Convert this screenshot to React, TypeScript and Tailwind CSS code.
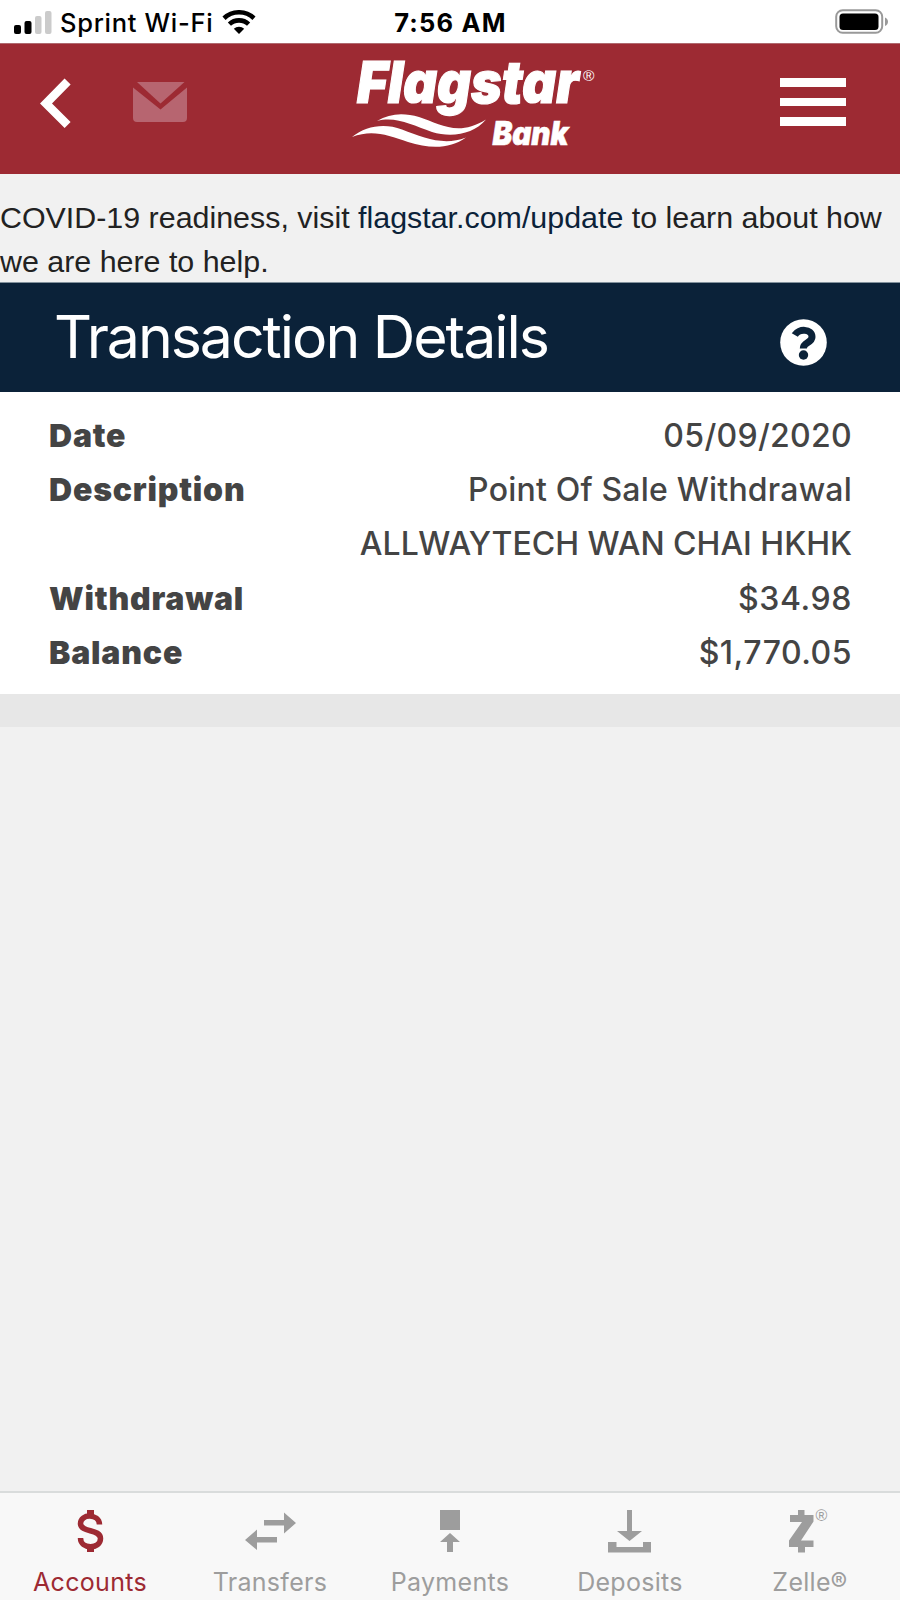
import type { ReactNode } from 'react';

const details = [
  { label: 'Date', value: ['05/09/2020'], spacing: 'tracking-[0.3px]' },
  {
    label: 'Description',
    value: ['Point Of Sale Withdrawal', 'ALLWAYTECH WAN CHAI HKHK'],
    spacing: '*:first:tracking-[0.2px]',
  },
  { label: 'Withdrawal', value: ['$34.98'], spacing: 'tracking-[0.6px]' },
  { label: 'Balance', value: ['$1,770.05'], spacing: 'tracking-[0.5px]' },
];

function StatusBar() {
  return (
    <div className="flex h-[43px] shrink-0 items-center justify-between bg-white pl-[14px] pr-[11px] text-black">
      {/* Left - Carrier */}
      <div className="flex w-[300px] items-center pt-px">
        <svg width="38" height="24" viewBox="0 0 38 24">
          <rect x="0" y="15" width="7" height="9" rx="2" />
          <rect x="10.5" y="11" width="7" height="13" rx="2" />
          <rect x="21" y="6" width="6.5" height="18" rx="2" fill="#cbcbcb" />
          <rect x="31" y="1" width="6.5" height="23" rx="2" fill="#cbcbcb" />
        </svg>
        <span className="ml-[8px] whitespace-nowrap pt-px text-[25.5px] font-medium leading-[30px] tracking-[0.7px]">
          Sprint Wi-Fi
        </span>
        <svg className="ml-[9px]" width="34" height="24" viewBox="0 0 34 24">
          <path d="M2 8.2a22 22 0 0 1 30 0" fill="none" stroke="#000" strokeWidth="4.6" />
          <path d="M7.4 14.2a14 14 0 0 1 19.2 0" fill="none" stroke="#000" strokeWidth="4.6" />
          <path d="M17 24l-5.2-5.3a7.6 7.6 0 0 1 10.4 0z" />
        </svg>
      </div>

      <span className="mr-[2px] whitespace-nowrap pt-[2px] text-[25.5px] font-bold leading-[30px] tracking-[1.2px]">
        7:56 AM
      </span>

      {/* Right - Battery */}
      <div className="flex w-[300px] justify-end">
        <svg width="54" height="25" viewBox="0 0 54 25">
          <rect x="1.2" y="1.2" width="46" height="22.6" rx="6.5" fill="none" stroke="#999" strokeWidth="2" />
          <rect x="4.5" y="4.5" width="39" height="16.5" rx="3.5" />
          <path d="M50 8.5c4 1.5 4 7 0 8.5z" fill="#999" />
        </svg>
      </div>
    </div>
  );
}

function Logo() {
  return (
    <svg className="overflow-visible" width="250" height="96" viewBox="350 56 250 96" fill="#fff">
      <g fontFamily="Inter, sans-serif" fontWeight="900" fontStyle="italic" stroke="#fff">
        <text x="357" y="103" fontSize="58" strokeWidth="1.2" textLength="222" lengthAdjust="spacingAndGlyphs">
          Flagstar
        </text>
        <text x="492.5" y="144.5" fontSize="33" strokeWidth="0.6" textLength="76" lengthAdjust="spacingAndGlyphs">
          Bank
        </text>
      </g>
      <text x="583" y="80.5" fontSize="15.5" fontFamily="'Liberation Sans', Arial, sans-serif">
        ®
      </text>
      <path d="M377 121C390 113 404 112.5 419 117C440 124 458 137 486 119.500C474 134 452 138 432 132C412 125 396 116 377 121Z" />
      <path d="M352 137C366 126 384 123 402 129.500C424 138 444 146 466 137.500C450 149 430 149 408 142C388 135 372 129 352 137Z" />
    </svg>
  );
}

function Header() {
  return (
    <header className="flex h-[131px] shrink-0 items-start justify-between border-t border-[#b0696f] bg-[#9d2a33] pl-[40px] pr-[54px]">
      <div className="flex w-[250px] pt-[34px]">
        <svg width="32" height="50" viewBox="0 0 32 50">
          <path d="M27.6 3.5L6 25.5L27.6 47" fill="none" stroke="#fff" strokeWidth="8.5" />
        </svg>
        <svg className="ml-[60px] mt-[4px]" width="56" height="40" viewBox="0 0 56 40" fill="#b76570">
          <path d="M5 0h47.5L28.5 21.5z" />
          <path d="M1 5.5L28.5 27.5L55 5.5V36a4 4 0 0 1-4 4H5a4 4 0 0 1-4-4z" />
        </svg>
      </div>

      <div className="ml-[60px] flex-1 pt-[12px]">
        <Logo />
      </div>

      <button className="flex flex-col gap-[11px] pt-[34px]">
        <span className="h-[8.5px] w-[66px] bg-white" />
        <span className="h-[8.5px] w-[66px] bg-white" />
        <span className="h-[8.5px] w-[66px] bg-white" />
      </button>
    </header>
  );
}

function Tab({ label, active, children }: { label: string; active?: boolean; children: ReactNode }) {
  return (
    <div
      className={`flex w-[180px] flex-col items-center pt-[16px] ${
        active ? 'text-[#9d2a33]' : 'text-[#9d9d9d]'
      }`}
    >
      <svg className="overflow-visible" width="60" height="44" viewBox="0 0 60 44" fill="currentColor">
        {children}
      </svg>
      <span className="mt-[14px] whitespace-nowrap text-[25px] leading-[30px] tracking-[0.3px]">
        {label}
      </span>
    </div>
  );
}

export default function App() {
  return (
    <div className="flex h-[1600px] w-[900px] flex-col overflow-hidden bg-[#f1f1f1] font-[Inter,sans-serif]">
      <StatusBar />
      <Header />

      <p className="h-[108px] shrink-0 whitespace-nowrap pt-[22px] font-['Liberation_Sans',Arial,sans-serif] text-[30.4px] leading-[43.5px] text-[#222]">
        COVID-19 readiness, visit <span className="text-[#0b2239]">flagstar.com/update</span> to learn about how
        <br />
        we are here to help.
      </p>

      <div className="flex h-[110px] shrink-0 justify-between border-t border-[#83929d] bg-[#0b2239] pl-[54px] pr-[73px] text-white">
        <h1 className="pt-[18px] text-[59px] leading-[72px] tracking-[-2.05px]">Transaction Details</h1>
        <svg className="mt-[36px]" width="47" height="47" viewBox="0 0 47 47">
          <circle cx="23.5" cy="23.5" r="23.3" fill="#fff" />
          <path
            d="M14.8 16C18.5 9.5 32 9.5 32 18C32 24 23.3 23 23.3 29.5"
            fill="none"
            stroke="#0b2239"
            strokeWidth="7"
          />
          <circle cx="23.5" cy="36" r="4.7" fill="#0b2239" />
        </svg>
      </div>

      {/* Transaction rows */}
      <div className="h-[302px] shrink-0 bg-white pl-[49px] pr-[48px] pt-[16.5px] text-[32px] leading-[54.4px] text-[#444]">
        {details.map(({ label, value, spacing }) => (
          <div key={label} className="flex justify-between">
            <span className="font-black tracking-[0.8px]">{label}</span>
            <div className={`text-right font-medium ${spacing}`}>
              {value.map((line) => (
                <div key={line} className="whitespace-nowrap">
                  {line}
                </div>
              ))}
            </div>
          </div>
        ))}
      </div>
      <div className="h-[33px] shrink-0 bg-[#e7e7e7]" />

      <div className="flex-1" />

      {/* Tabs */}
      <nav className="flex h-[109px] shrink-0 border-t-2 border-[#d9dcdc] bg-[#f8f8f8]">
        <Tab label="Accounts" active>
          <path d="M27 1h7v7h-7zM27 36h7v7h-7z" />
          <path
            d="M39.5 15.5C39 4.5 20.5 4.5 20.5 14.5C20.5 24 40.5 19.5 40.5 29.5C40.5 40.5 20.5 40.5 20.5 29"
            fill="none"
            stroke="currentColor"
            strokeWidth="5.5"
          />
        </Tab>
        <Tab label="Transfers">
          <path d="M24 11h20V3.500L56 14L44 24.500V16.500H24zM37 28H17V20.500L5 31L17 41V33.500H37z" />
        </Tab>
        <Tab label="Payments">
          <path d="M20 1h20v20H20zM30 24l10 9h-7v10h-6V33h-7z" />
        </Tab>
        <Tab label="Deposits">
          <path d="M27 1h5v21h10L29.500 32L17 22h10zM8 33h8.500v5H43v-5h8v10.500H8z" />
        </Tab>
        <Tab label="Zelle®">
          <path d="M10 6h8V1h6.500v5H33.500v6.500L21 31.500h12.500v6.500h-8.500v5.500H18V38H9v-6.500L22 13H10z" />
          <text x="35.5" y="12" fontSize="16" fontFamily="'Liberation Sans', Arial, sans-serif">
            ®
          </text>
        </Tab>
      </nav>
    </div>
  );
}
